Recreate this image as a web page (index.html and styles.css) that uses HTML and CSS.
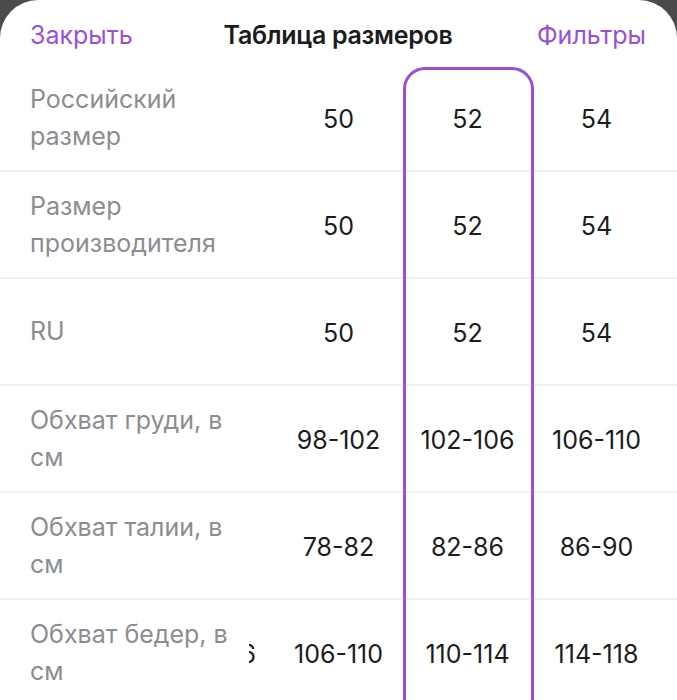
FILE: index.html
```html
<!DOCTYPE html>
<html lang="ru">
<head>
<meta charset="utf-8">
<link rel="stylesheet" href="styles.css">
</head>
<body>
<div class="sheet">
  <header class="bar">
    <span class="link">Закрыть</span>
    <span class="title">Таблица размеров</span>
    <span class="link right">Фильтры</span>
  </header>
  <div class="table">
    <div class="highlight"></div>
    <div class="row">
      <div class="label">Российский размер</div>
      <div class="val">50</div><div class="val">52</div><div class="val">54</div>
    </div>
    <div class="row">
      <div class="label">Размер производителя</div>
      <div class="val">50</div><div class="val">52</div><div class="val">54</div>
    </div>
    <div class="row">
      <div class="label">RU</div>
      <div class="val">50</div><div class="val">52</div><div class="val">54</div>
    </div>
    <div class="row">
      <div class="label">Обхват груди, в см</div>
      <div class="val">98-102</div><div class="val">102-106</div><div class="val">106-110</div>
    </div>
    <div class="row">
      <div class="label">Обхват талии, в см</div>
      <div class="val">78-82</div><div class="val">82-86</div><div class="val">86-90</div>
    </div>
    <div class="row">
      <div class="label last">
        <span class="label-text">Обхват бедер, в см</span>
        <span class="peek"><span>6</span></span>
      </div>
      <div class="val">106-110</div><div class="val">110-114</div><div class="val">114-118</div>
    </div>
  </div>
</div>
</body>
</html>
```

FILE: styles.css
```css
* { box-sizing: border-box; }
html, body { margin: 0; padding: 0; }
body {
  background: #4b4b4d;
  font-family: Inter, "Noto Sans", sans-serif;
  width: 677px;
  height: 700px;
  overflow: hidden;
}
.sheet {
  background: #fff;
  border-radius: 38px 38px 0 0;
  height: 700px;
  overflow: hidden;
}
.bar {
  height: 65px;
  display: grid;
  grid-template-columns: 1fr auto 1fr;
  align-items: center;
  padding: 5px 31px 0 30px;
  font-size: 25px;
}
.link { color: #9a50d6; }
.right { justify-self: end; }
.title { color: #1c1c1e; font-weight: 600; letter-spacing: -0.3px; }
.table { position: relative; }
.highlight {
  position: absolute;
  left: 403px;
  top: 2px;
  width: 131px;
  height: 700px;
  border: 3px solid #9a4fd6;
  border-radius: 22px 22px 0 0;
  pointer-events: none;
}
.row {
  display: grid;
  grid-template-columns: 274px 129px 129px 129px;
  align-items: center;
  height: 107px;
  border-bottom: 2px solid #f1f1f3;
}
.label {
  padding-left: 30px;
  padding-right: 40px;
  color: #8c8c92;
  font-size: 25px;
  line-height: 37px;
}
.val {
  text-align: center;
  color: #1c1c1e;
  font-size: 25px;
  padding-top: 3px;
}
.last {
  display: flex;
  align-items: center;
  justify-content: space-between;
  padding-right: 18px;
}
.label-text { width: 204px; }
.peek {
  width: 7px;
  overflow: hidden;
  display: flex;
  justify-content: flex-end;
  color: #1c1c1e;
  padding-top: 3px;
}
```
